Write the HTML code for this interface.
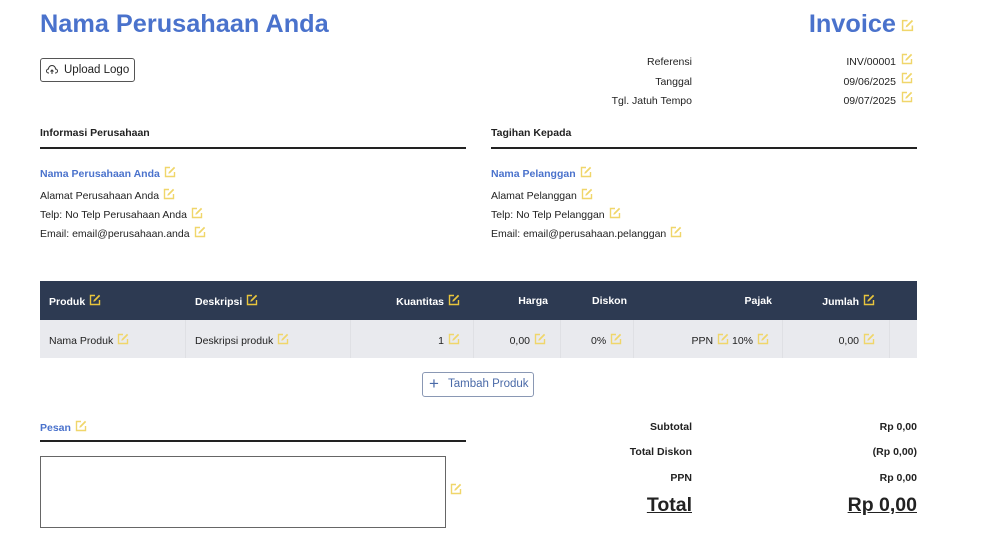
<!DOCTYPE html>
<html><head><meta charset="utf-8"><style>
*{margin:0;padding:0;box-sizing:border-box}
body{width:1000px;height:556px;background:#fff;font-family:"Liberation Sans",Arial,sans-serif;color:#222;position:relative;overflow:hidden;font-size:10.5px}
.a{position:absolute;white-space:nowrap;line-height:14px}
.r{text-align:right}
.b{font-weight:bold}
.blue{color:#4a72cc}
.ic{display:inline-block;vertical-align:-1px;margin-left:4px}
.hl{position:absolute;height:1.5px;background:#222}
</style></head><body>
<svg width="0" height="0" style="position:absolute"><defs>
<symbol id="e" viewBox="0 0 12 12"><path d="M6 1.5H1.5v9h9V6" fill="none" stroke="currentColor" stroke-width="1.4"/><path d="M10 0.8 11.2 2 6 7.2 4.3 7.7 4.8 6z" fill="currentColor"/></symbol>
</defs></svg>

<div class="a b blue" style="left:40px;top:9px;font-size:25.3px;line-height:30px">Nama Perusahaan Anda</div>
<div class="a b blue r" style="left:700px;width:196px;top:9px;font-size:25.3px;line-height:30px">Invoice</div>
<svg class="a" style="left:901px;top:19px;color:#f0d66a" width="13" height="13"><use href="#e"/></svg>

<div class="a" style="left:40px;top:58px;width:95px;height:24px;border:1px solid #555;border-radius:3px;font-size:11.5px;line-height:22px;padding-left:23px">Upload Logo</div>
<svg class="a" style="left:46px;top:65px" width="12" height="10" viewBox="0 0 12 10"><path d="M3 8H2.5A2 2 0 0 1 2.5 4 3.5 3.5 0 0 1 9.5 4 2 2 0 0 1 9.5 8H9M6 9V5M4.5 6.5 6 5 7.5 6.5" fill="none" stroke="#333" stroke-width="1"/></svg>

<div class="a r" style="left:560px;width:132px;top:55px">Referensi</div>
<div class="a r" style="left:560px;width:132px;top:75px">Tanggal</div>
<div class="a r" style="left:560px;width:132px;top:94px">Tgl. Jatuh Tempo</div>
<div class="a r" style="left:780px;width:116px;top:55px">INV/00001</div>
<div class="a r" style="left:780px;width:116px;top:75px">09/06/2025</div>
<div class="a r" style="left:780px;width:116px;top:94px">09/07/2025</div>
<svg class="a" style="left:901px;top:53px;color:#f0d66a" width="12" height="12"><use href="#e"/></svg>
<svg class="a" style="left:901px;top:72px;color:#f0d66a" width="12" height="12"><use href="#e"/></svg>
<svg class="a" style="left:901px;top:91px;color:#f0d66a" width="12" height="12"><use href="#e"/></svg>

<div class="a b" style="left:40px;top:126px">Informasi Perusahaan</div>
<div class="hl" style="left:40px;top:147px;width:426px"></div>
<div class="a b blue" style="left:40px;top:166px">Nama Perusahaan Anda<svg class="ic" style="color:#f0d66a" width="12" height="12"><use href="#e"/></svg></div>
<div class="a" style="left:40px;top:188px">Alamat Perusahaan Anda<svg class="ic" style="color:#f0d66a" width="12" height="12"><use href="#e"/></svg></div>
<div class="a" style="left:40px;top:207px">Telp: No Telp Perusahaan Anda<svg class="ic" style="color:#f0d66a" width="12" height="12"><use href="#e"/></svg></div>
<div class="a" style="left:40px;top:226px">Email: email@perusahaan.anda<svg class="ic" style="color:#f0d66a" width="12" height="12"><use href="#e"/></svg></div>

<div class="a b" style="left:491px;top:126px">Tagihan Kepada</div>
<div class="hl" style="left:491px;top:147px;width:426px"></div>
<div class="a b blue" style="left:491px;top:166px">Nama Pelanggan<svg class="ic" style="color:#f0d66a" width="12" height="12"><use href="#e"/></svg></div>
<div class="a" style="left:491px;top:188px">Alamat Pelanggan<svg class="ic" style="color:#f0d66a" width="12" height="12"><use href="#e"/></svg></div>
<div class="a" style="left:491px;top:207px">Telp: No Telp Pelanggan<svg class="ic" style="color:#f0d66a" width="12" height="12"><use href="#e"/></svg></div>
<div class="a" style="left:491px;top:226px">Email: email@perusahaan.pelanggan<svg class="ic" style="color:#f0d66a" width="12" height="12"><use href="#e"/></svg></div>

<div class="a" style="left:40px;top:281px;width:877px;height:39px;background:#2d3a52"></div>
<div class="a" style="left:40px;top:320px;width:877px;height:38px;background:#e9eaee"></div>
<div class="a" style="left:185px;top:320px;width:1px;height:38px;background:#dfe0e4"></div>
<div class="a" style="left:350px;top:320px;width:1px;height:38px;background:#dfe0e4"></div>
<div class="a" style="left:473px;top:320px;width:1px;height:38px;background:#dfe0e4"></div>
<div class="a" style="left:560px;top:320px;width:1px;height:38px;background:#dfe0e4"></div>
<div class="a" style="left:633px;top:320px;width:1px;height:38px;background:#dfe0e4"></div>
<div class="a" style="left:782px;top:320px;width:1px;height:38px;background:#dfe0e4"></div>
<div class="a" style="left:889px;top:320px;width:1px;height:38px;background:#dfe0e4"></div>

<div class="a b" style="left:49px;top:294px;color:#fff">Produk<svg class="ic" style="color:#e9c53c" width="12" height="12"><use href="#e"/></svg></div>
<div class="a b" style="left:195px;top:294px;color:#fff">Deskripsi<svg class="ic" style="color:#e9c53c" width="12" height="12"><use href="#e"/></svg></div>
<div class="a b r" style="left:360px;width:100px;top:294px;color:#fff">Kuantitas<svg class="ic" style="color:#e9c53c" width="12" height="12"><use href="#e"/></svg></div>
<div class="a b r" style="left:480px;width:68px;top:294px;color:#fff">Harga</div>
<div class="a b" style="left:592px;top:294px;color:#fff">Diskon</div>
<div class="a b r" style="left:650px;width:122px;top:294px;color:#fff">Pajak</div>
<div class="a b r" style="left:790px;width:85px;top:294px;color:#fff">Jumlah<svg class="ic" style="color:#e9c53c" width="12" height="12"><use href="#e"/></svg></div>

<div class="a" style="left:49px;top:333px">Nama Produk<svg class="ic" style="color:#f0d66a" width="12" height="12"><use href="#e"/></svg></div>
<div class="a" style="left:195px;top:333px">Deskripsi produk<svg class="ic" style="color:#f0d66a" width="12" height="12"><use href="#e"/></svg></div>
<div class="a r" style="left:360px;width:100px;top:333px">1<svg class="ic" style="color:#f0d66a" width="12" height="12"><use href="#e"/></svg></div>
<div class="a r" style="left:480px;width:66px;top:333px">0,00<svg class="ic" style="color:#f0d66a" width="12" height="12"><use href="#e"/></svg></div>
<div class="a" style="left:591px;top:333px">0%<svg class="ic" style="color:#f0d66a" width="12" height="12"><use href="#e"/></svg></div>
<div class="a r" style="left:650px;width:119px;top:333px">PPN<svg class="ic" style="color:#f0d66a" width="12" height="12"><use href="#e"/></svg> 10%<svg class="ic" style="color:#f0d66a" width="12" height="12"><use href="#e"/></svg></div>
<div class="a r" style="left:790px;width:85px;top:333px">0,00<svg class="ic" style="color:#f0d66a" width="12" height="12"><use href="#e"/></svg></div>

<div class="a" style="left:422px;top:372px;width:112px;height:25px;border:1px solid #8a98b4;border-radius:3px;color:#4a6aa8;font-size:11.5px;line-height:23px;padding-left:25px">Tambah Produk</div>
<div class="a" style="left:429px;top:375px;color:#4a6aa8;font-size:17px;line-height:17px">+</div>

<div class="a b blue" style="left:40px;top:420px">Pesan<svg class="ic" style="color:#f0d66a" width="12" height="12"><use href="#e"/></svg></div>
<div class="hl" style="left:40px;top:440px;width:426px"></div>
<div class="a" style="left:40px;top:456px;width:406px;height:72px;border:1px solid #666"></div>
<svg class="a" style="left:450px;top:483px;color:#f0d66a" width="12" height="12"><use href="#e"/></svg>

<div class="a b r" style="left:560px;width:132px;top:420px">Subtotal</div>
<div class="a b r" style="left:560px;width:132px;top:445px">Total Diskon</div>
<div class="a b r" style="left:560px;width:132px;top:471px">PPN</div>
<div class="a b r" style="left:780px;width:137px;top:420px">Rp 0,00</div>
<div class="a b r" style="left:780px;width:137px;top:445px">(Rp 0,00)</div>
<div class="a b r" style="left:780px;width:137px;top:471px">Rp 0,00</div>
<div class="a b r" style="left:560px;width:132px;top:493px;font-size:19.5px;line-height:24px;text-decoration:underline">Total</div>
<div class="a b r" style="left:780px;width:137px;top:493px;font-size:19.5px;line-height:24px;text-decoration:underline">Rp 0,00</div>
</body></html>
